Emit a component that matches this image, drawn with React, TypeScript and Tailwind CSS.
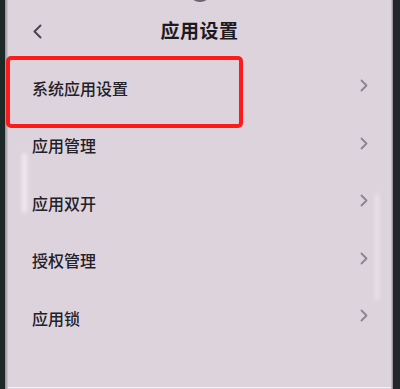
import React from "react";

const items = ["系统应用设置", "应用管理", "应用双开", "授权管理", "应用锁"];

function Chevron() {
  return (
    <svg width="8" height="13" viewBox="0 0 8 13" className="-mt-[4px]">
      <path d="M1.5 1.5 L6.5 6.5 L1.5 11.5" fill="none" stroke="#8a8590" strokeWidth="1.8" strokeLinecap="round" strokeLinejoin="round" />
    </svg>
  );
}

export default function App() {
  return (
    <div
      className="w-[400px] h-[389px] flex bg-[#1e2828] overflow-hidden"
      style={{ fontFamily: '"Noto Sans CJK SC", "Noto Sans", sans-serif' }}
    >
      <div className="w-[5px] bg-[#1c2927]" />
      <div className="w-[3px] bg-gradient-to-r from-[#8f8d93] to-[#d4cbd4]" />
      <div className="flex-1 relative bg-[#dcd3dc] flex flex-col">
        <div className="absolute left-1/2 -translate-x-1/2 -top-[22px] w-[24px] h-[24px] rounded-full border-2 border-[#6a6670]" />
        <div className="absolute left-[14px] top-[153px] w-[5px] h-[60px] rounded-full bg-white/60 blur-[2px]" />
        <div className="absolute left-[367px] top-[193px] w-[4px] h-[108px] rounded-full bg-white/40 blur-[2px]" />
        <div className="h-[59px] pt-[4px] flex items-center relative">
          <div className="pl-[24px]">
            <svg width="11" height="15" viewBox="0 0 11 15">
              <path d="M8.5 1.5 L2.5 7.5 L8.5 13.5" fill="none" stroke="#4a4650" strokeWidth="2" strokeLinecap="round" strokeLinejoin="round" />
            </svg>
          </div>
          <div className="absolute inset-x-0 top-[4px] bottom-0 flex items-center justify-center">
            <span className="text-[19px] font-bold text-[#1c1a1e] tracking-[0.5px] -mt-[3px]">应用设置</span>
          </div>
        </div>
        {items.map((t) => (
          <div key={t} className="h-[57.5px] flex items-center justify-between pl-[24px] pr-[23px]">
            <span className="text-[16px] font-medium text-[#232028]">{t}</span>
            <Chevron />
          </div>
        ))}
        <div className="absolute -left-[2px] top-[56px] w-[237px] h-[72px] border-[4px] border-[#ff1a1a] rounded-[5px]" />
        <div className="absolute left-0 right-0 bottom-[1px] h-[1px] bg-white/70" />
      </div>
      <div className="w-[2px] bg-gradient-to-r from-[#d4cbd4] to-[#8a8690]" />
      <div className="w-[7px] bg-[#24252b]" />
    </div>
  );
}
